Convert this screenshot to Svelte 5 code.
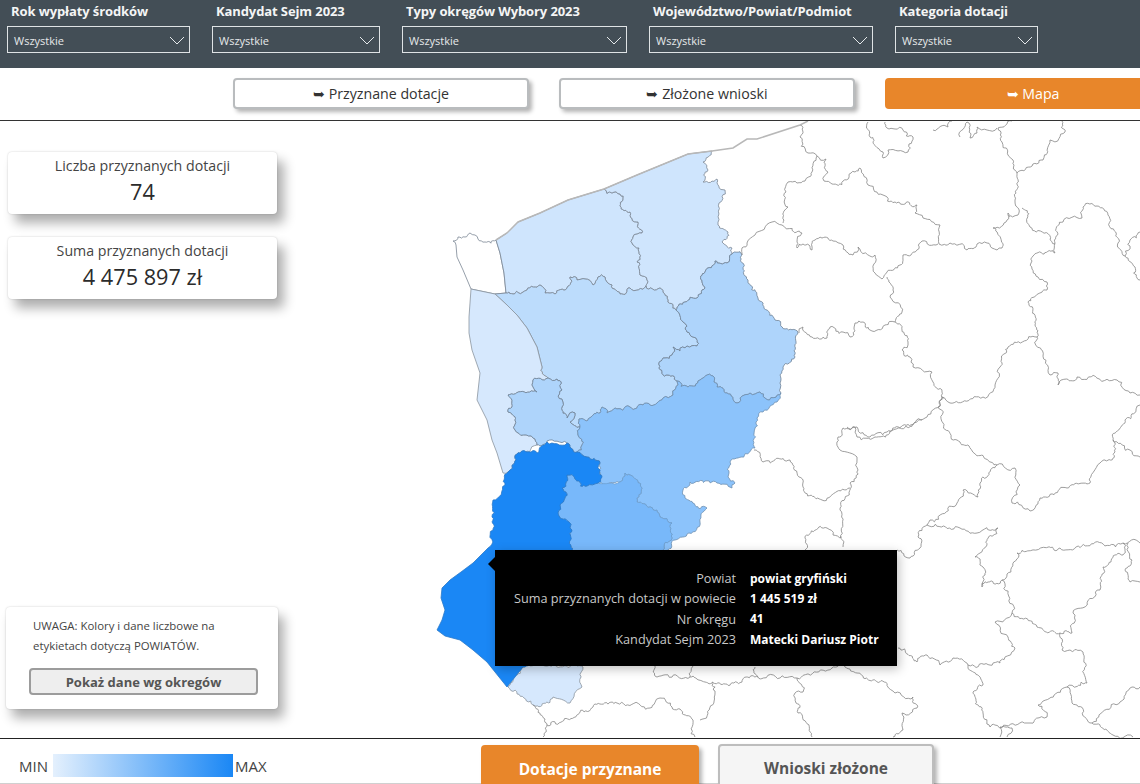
<script>
  const filters = [
    { label: 'Rok wypłaty środków', width: 183 },
    { label: 'Kandydat Sejm 2023', width: 168 },
    { label: 'Typy okręgów Wybory 2023', width: 225 },
    { label: 'Województwo/Powiat/Podmiot', width: 224 },
    { label: 'Kategoria dotacji', width: 143 }
  ];

  // edges between these points stay straight (coast and the long smooth borders)
  const smooth = new Set(('496,240 507,233 518,222 540,213 568,200 604,189 637,175 688,154 712,151 500,253 504,273 506,293 495,294 471,289 ' +
    '507,305 517,315 527,328 537,347 542,367 469,317 469,333 472,350 480,373 477,400 487,420 492,440 497,453 503,473 463,270 457,257 456,245 ' +
    '488,548 473,563 461,572 450,580 442,588 441,598 445,610 442,620 437,630 445,636 460,640 473,650 487,662 507,687 523,667 700,152 733,148 747,139 757,139 800,125 808,121').split(' '));

  function rng(seed) {
    let s = seed >>> 0;
    return () => {
      s = (s * 1664525 + 1013904223) >>> 0;
      return s / 4294967296;
    };
  }

  // midpoint displacement, seeded by the edge itself so shared borders line up
  function split(a, b, rand, out) {
    const dx = b[0] - a[0];
    const dy = b[1] - a[1];
    const len = Math.hypot(dx, dy);
    if (len < 3) return out.push(b);
    const d = (rand() * 2 - 1) * Math.min(len * 0.3, 3);
    const m = [(a[0] + b[0]) / 2 - (dy / len) * d, (a[1] + b[1]) / 2 + (dx / len) * d];
    split(a, m, rand, out);
    split(m, b, rand, out);
  }

  function wiggle(str, closed) {
    const pts = str.split(' ').map((p) => p.split(',').map(Number));
    const out = [pts[0]];
    const n = closed ? pts.length : pts.length - 1;
    for (let i = 0; i < n; i++) {
      const a = pts[i];
      const b = pts[(i + 1) % pts.length];
      if (smooth.has(a.join()) && smooth.has(b.join())) {
        out.push(b);
        continue;
      }
      const flip = a[0] > b[0] || (a[0] === b[0] && a[1] > b[1]);
      const [p, q] = flip ? [b, a] : [a, b];
      const rand = rng(p[0] * 7919 + p[1] * 613 + q[0] * 101 + q[1] * 37);
      for (let k = 0; k < 5; k++) rand();
      const part = [];
      split(p, q, rand, part);
      if (flip) {
        part.pop();
        part.reverse();
        part.push(a === p ? q : p);
        out.push(...part.slice(0, -1), b);
      } else {
        out.push(...part);
      }
    }
    return out.map((p) => p[0].toFixed(1) + ',' + p[1].toFixed(1)).join(' ');
  }

  const regions = [
    { fill: '#ffffff', line: '#7b8794', pts: '453,241 458,237 465,237 470,233 475,235 478,239 485,242 496,240 500,253 504,273 506,293 495,294 471,289 463,270 457,257 456,245' },
    { fill: '#cfe5fd', line: '#7b8794', pts: '496,240 507,233 518,222 540,213 568,200 604,189 612,193 620,194 623,200 620,206 630,212 638,222 642,233 633,237 632,243 639,248 637,262 640,275 647,280 646,286 630,288 620,294 612,285 605,277 598,277 593,285 585,279 577,280 570,277 567,288 555,294 545,293 540,285 527,290 506,293 504,273 500,253' },
    { fill: '#cfe5fd', line: '#7b8794', pts: '604,189 637,175 688,154 712,151 703,162 708,170 703,182 717,179 725,190 719,203 718,225 728,232 722,242 732,248 732,254 727,263 715,261 705,272 702,282 705,288 697,298 685,302 676,310 668,300 660,288 646,286 647,280 640,275 637,262 639,248 632,243 633,237 642,233 638,222 630,212 620,206 623,200 620,194 612,193' },
    { fill: '#bcdcfc', line: '#7b8794', pts: '495,294 506,293 527,290 540,285 545,293 555,294 567,288 570,277 577,280 585,279 593,285 598,277 605,277 612,285 620,294 630,288 646,286 660,288 668,300 676,310 683,322 687,332 693,337 697,346 687,346 680,351 673,347 672,355 665,358 659,368 668,375 677,381 673,395 663,398 657,403 643,405 630,407 615,408 607,413 602,407 600,413 579,419 580,427 570,422 575,413 567,418 562,407 562,390 557,379 548,378 542,367 537,347 527,328 517,315 507,305' },
    { fill: '#d6e8fd', line: '#8a949e', pts: '471,289 495,294 507,305 517,315 527,328 537,347 542,367 548,378 533,380 532,385 537,392 508,395 512,407 508,412 515,420 515,430 533,438 537,445 520,453 508,472 503,473 497,453 492,440 487,420 477,400 480,373 472,350 469,333 469,317' },
    { fill: '#aed4fb', line: '#6f8296', pts: '533,380 548,378 557,379 562,390 562,407 567,418 575,413 570,422 580,427 578,435 582,445 577,452 567,443 547,441 537,445 533,438 515,430 515,420 508,412 512,407 508,395 537,392 532,385' },
    { fill: '#aed4fb', line: '#6f8296', pts: '732,254 742,254 748,280 758,298 775,320 798,333 795,357 783,367 780,383 781,393 765,398 760,392 750,393 737,403 727,393 717,387 713,376 700,380 688,387 677,381 668,375 659,368 665,358 672,355 673,347 680,351 687,346 697,346 693,337 687,332 683,322 676,310 685,302 697,298 705,288 702,282 705,272 715,261 727,263' },
    { fill: '#8cc3fb', line: '#6f8fb0', pts: '579,419 600,413 602,407 607,413 615,408 630,407 643,405 657,403 663,398 673,395 677,381 688,387 700,380 713,376 717,387 727,393 737,403 750,393 760,392 765,398 781,393 777,402 763,412 757,418 755,448 730,462 728,477 735,483 732,488 717,483 690,482 683,490 685,498 707,508 700,522 675,540 668,550 663,550 672,538 672,523 660,517 637,502 642,488 630,475 625,473 620,482 597,484 600,463 587,457 577,452 582,445 578,435 580,427' },
    { fill: '#78b8fa', line: '#6c9fd2', pts: '598,483 587,486 567,475 562,488 565,498 558,513 572,530 572,600 663,600 663,550 672,538 672,523 660,517 637,502 642,488 630,475 625,473 620,482' },
    { fill: '#d6e8fd', line: '#8a949e', pts: '508,687 523,667 583,667 582,687 570,703 553,697 533,705' },
    { fill: '#1a87f5', line: '#2a78c8', pts: '547,442 537,453 520,453 508,472 505,485 493,500 492,517 493,530 488,548 473,563 461,572 450,580 442,588 441,598 445,610 442,620 437,630 445,636 460,640 473,650 487,662 507,687 523,667 572,640 572,530 558,513 565,498 562,488 567,475 587,486 598,483 600,463 587,457 577,452 567,443' }
  ].map((r) => ({ ...r, pts: wiggle(r.pts, true) }));

  const borders = [
    '800,125 800,137 808,153 817,156 826,159 828,172 824,181 832,184 843,181 855,172 860,168 868,185 883,195 895,202 917,205 915,213 923,218 940,225 939,244 950,243 967,250 977,244 987,243 992,248 1002,248 993,228 1007,220 1008,213 1018,215 1015,200 1017,173 1013,160 1002,142 998,128 1012,121',
    '817,156 812,172 805,181 797,183 788,182 786,192 788,207 783,217 783,223',
    '742,255 747,243 755,235 772,222 782,225 802,233 797,242 797,248 803,244 812,250 815,240 822,238 833,241 843,245 853,255 858,247 875,255 875,273 882,279 887,272 900,265 903,255 915,252 922,241 938,244',
    '799,333 803,327 812,337 827,338 830,327 843,332 850,337 855,323 863,322 870,330 885,325 895,322 902,312 890,297 893,290 887,277',
    '895,322 908,342 902,350 910,357 913,367 932,372 933,382 942,392 940,403 927,417 913,425 887,432 870,437 857,427 843,428 838,437 840,450 857,460 858,470 850,483 840,510 843,547',
    '847,427 855,427 857,437 875,437 900,428 922,420',
    '754,450 763,462 790,460 803,487 822,500 850,488',
    '942,397 950,403 983,397 995,385 1000,367 1008,347 1037,337 1035,325 1028,302 1047,290 1047,282 1038,277 1031,263 1033,256 1055,253 1055,243 1063,222 1082,218 1083,207 1097,206 1108,215 1118,243 1125,256 1130,240 1140,232',
    '1017,173 1043,160 1050,140 1065,132 1062,121',
    '1022,208 1030,227 1055,244',
    '1037,337 1050,375 1058,373 1058,385 1077,377 1117,380 1130,393 1140,395',
    '1125,256 1135,267 1137,278 1140,280',
    '942,397 938,407 943,423 960,442 997,465 1015,468 1020,485 1012,503 1030,511 1040,498 1067,488 1090,483 1100,463 1115,452 1113,440 1140,457',
    '1113,440 1125,420 1140,405',
    '997,465 980,483 978,497 963,490 957,503 930,520 927,525 960,528 977,533 998,528 987,545 975,557 983,567 982,587 1002,580 1017,553 1060,548 1123,543 1140,543',
    '927,525 918,537 920,548 910,558 897,550',
    '1002,580 1012,613 1037,627 1060,633 1072,633 1073,613 1100,590 1103,567 1123,555 1123,543',
    '1128,543 1132,560 1125,570 1130,582 1140,582',
    '1012,613 995,622 1008,637 1015,648 1000,663 968,665 953,658 940,665 927,655 917,662 898,648',
    '1060,633 1062,650 1083,652 1087,683 1067,687 1038,705 1047,717 1027,723 990,727 983,713 973,692 983,685 968,665',
    '1067,687 1072,703 1092,723 1120,702 1132,687 1140,687',
    '1092,723 1113,735 1133,737',
    '755,667 758,677 797,678 832,668 845,667 857,673 895,693 913,697 917,708 902,713 903,730 893,737',
    '758,677 712,682 715,693 700,720',
    '797,678 803,692 795,693 798,713 812,737',
    '533,705 547,725 543,737',
    '547,725 593,707 617,703 650,708 660,698 672,707 693,720 695,737',
    '655,666 657,677 690,677 693,666',
    '690,677 712,683',
    '1007,737 1012,728 1000,727 1000,737',
    '805,550 805,538 827,528 842,537',
    '868,122 870,137 883,152 883,158 888,150 908,152 913,137 903,130 887,128 885,122',
    '933,130 948,127 952,121',
    '960,137 967,122 970,138 977,133 977,127 987,130 997,128'
  ].map((b) => wiggle(b, false));

  const coast = '496,240 507,233 518,222 540,213 568,200 604,189 637,175 688,154 712,151 733,148 747,139 757,139 800,125 808,121';
</script>

<div class="page">
  <header class="filters">
    {#each filters as f}
      <div class="filter">
        <div class="filter-label">{f.label}</div>
        <div class="select" style="width: {f.width}px">
          <span>Wszystkie</span>
          <svg width="16" height="9" viewBox="0 0 16 9"><path d="M1 1l7 7 7-7" fill="none" stroke="#e6eaec" stroke-width="1"/></svg>
        </div>
      </div>
    {/each}
  </header>

  <nav class="tabs">
    <button class="tab">➥ Przyznane dotacje</button>
    <button class="tab">➥ Złożone wnioski</button>
    <button class="tab active">➥ Mapa</button>
  </nav>

  <main class="map-area">
    <svg class="map" viewBox="0 121 1140 617" width="1140" height="617">
      {#each regions as r}
        <polygon points={r.pts} fill={r.fill} stroke={r.line} stroke-width="0.8" stroke-linejoin="round" />
      {/each}
      {#each borders as b}
        <polyline points={b} fill="none" stroke="#858585" stroke-width="0.8" stroke-linejoin="round" />
      {/each}
      <polyline points={coast} fill="none" stroke="#b8b8b8" stroke-width="1.5" />
    </svg>

    <aside class="side">
      <div class="stats">
        <div class="card">
          <div class="card-title">Liczba przyznanych dotacji</div>
          <div class="card-value">74</div>
        </div>
        <div class="card">
          <div class="card-title">Suma przyznanych dotacji</div>
          <div class="card-value">4 475 897 zł</div>
        </div>
      </div>
      <div class="note">
        <p>UWAGA: Kolory i dane liczbowe na etykietach dotyczą POWIATÓW.</p>
        <button class="note-btn">Pokaż dane wg okregów</button>
      </div>
    </aside>

    <div class="tooltip">
      <span class="t-label">Powiat</span><span class="t-value">powiat gryfiński</span>
      <span class="t-label">Suma przyznanych dotacji w powiecie</span><span class="t-value">1 445 519 zł</span>
      <span class="t-label">Nr okręgu</span><span class="t-value">41</span>
      <span class="t-label">Kandydat Sejm 2023</span><span class="t-value">Matecki Dariusz Piotr</span>
    </div>
  </main>

  <footer class="bottom">
    <div class="legend">
      <span>MIN</span>
      <div class="scale"></div>
      <span>MAX</span>
    </div>
    <div class="switch">
      <button class="switch-btn on">Dotacje przyznane</button>
      <button class="switch-btn">Wnioski złożone</button>
    </div>
  </footer>
</div>

<style>
  :global(body) {
    margin: 0;
    background: #fff;
  }

  .page {
    width: 1140px;
    height: 784px;
    display: flex;
    flex-direction: column;
    overflow: hidden;
    font-family: "Open Sans", "Noto Sans", sans-serif;
    color: #333;
  }

  .filters {
    height: 68px;
    box-sizing: border-box;
    flex: none;
    background: #434e56;
    display: flex;
    gap: 22px;
    padding: 3px 0 0 7px;
  }

  .filter-label {
    color: #f4f5f5;
    font-size: 13px;
    font-weight: 700;
    line-height: 17px;
    padding-left: 4px;
    margin-bottom: 6px;
    white-space: nowrap;
    letter-spacing: -0.1px;
  }

  .select {
    height: 27px;
    box-sizing: border-box;
    border: 1px solid #dfe3e5;
    display: flex;
    align-items: center;
    justify-content: space-between;
    padding: 1px 4px 0 6px;
    color: #e6e9ea;
    font-size: 11px;
  }

  .tabs {
    flex: none;
    height: 53px;
    box-sizing: border-box;
    border-bottom: 1px solid #333;
    display: flex;
    gap: 30px;
    padding: 10px 0 0 233px;
  }

  .tab {
    flex: none;
    width: 296px;
    height: 31px;
    background: #fff;
    border: 2px solid #b9bcbe;
    border-radius: 4px;
    box-shadow: 3px 3px 4px rgba(0, 0, 0, 0.3);
    font: inherit;
    font-size: 14.2px;
    color: #333;
    padding: 0;
  }

  .tab.active {
    background: #e8862a;
    border-color: #e8862a;
    color: #fff;
    box-shadow: none;
  }

  .map-area {
    position: relative;
    flex: 1;
    border-bottom: 1px solid #222;
  }

  .map {
    position: absolute;
    left: 0;
    top: 0;
    display: block;
  }

  .side {
    position: relative;
    height: 100%;
    width: 290px;
    box-sizing: border-box;
    padding: 31px 0 29px 8px;
    display: flex;
    flex-direction: column;
    justify-content: space-between;
  }

  .stats {
    display: flex;
    flex-direction: column;
    gap: 23px;
  }

  .card {
    width: 269px;
    height: 62px;
    box-sizing: border-box;
    background: #fff;
    border-radius: 4px;
    box-shadow: 7px 9px 12px rgba(0, 0, 0, 0.32), 0 0 2px rgba(0, 0, 0, 0.2);
    text-align: center;
    padding-top: 4px;
  }

  .card-title {
    font-size: 14.2px;
    line-height: 20px;
    color: #444;
  }

  .card-value {
    font-size: 21.7px;
    line-height: 32px;
    color: #2b2b2b;
  }

  .note {
    width: 272px;
    height: 102px;
    margin-left: -2px;
    box-sizing: border-box;
    background: #fff;
    border-radius: 4px;
    box-shadow: 6px 9px 12px rgba(0, 0, 0, 0.32), 0 0 2px rgba(0, 0, 0, 0.2);
    padding: 9px 21px 0 27px;
  }

  .note p {
    margin: 0 0 12px;
    font-size: 11.4px;
    line-height: 20px;
    color: #444;
  }

  .note-btn {
    display: block;
    width: 229px;
    height: 27px;
    margin-left: -4px;
    background: #eeeeee;
    border: 2px solid #9c9c9c;
    border-radius: 4px;
    font: inherit;
    font-size: 13px;
    font-weight: 700;
    color: #555;
    padding: 0;
  }

  .tooltip {
    position: absolute;
    left: 495px;
    top: 429px;
    width: 402px;
    height: 116px;
    box-sizing: border-box;
    background: #000;
    box-shadow: 2px 3px 10px rgba(0, 0, 0, 0.25);
    padding: 18px 0 0 0;
    display: grid;
    grid-template-columns: 241px 1fr;
    column-gap: 14px;
    grid-auto-rows: 20.3px;
    align-items: center;
    font-size: 12px;
  }

  .tooltip::before {
    content: '';
    position: absolute;
    left: -7px;
    top: 7px;
    border: 7px solid transparent;
    border-left: 0;
    border-right-color: #000;
  }

  .t-label {
    color: #c8c8c8;
    font-size: 12.7px;
    text-align: right;
    white-space: nowrap;
  }

  .t-value {
    color: #fff;
    font-weight: 700;
    white-space: nowrap;
  }

  .bottom {
    flex: none;
    height: 45px;
    box-sizing: border-box;
    border-bottom: 1px solid #d0d0d0;
    position: relative;
    display: flex;
  }

  .legend {
    width: 481px;
    flex: none;
    display: flex;
    align-items: center;
    gap: 2px;
    padding: 9px 0 0 19px;
    box-sizing: border-box;
    font-size: 15px;
    color: #444;
  }

  .scale {
    width: 180px;
    height: 23px;
    margin-left: 3px;
    background: linear-gradient(90deg, #e4f0fd, #1a87f5);
  }

  .switch {
    display: flex;
    gap: 19px;
    padding-top: 5px;
  }

  .switch-btn {
    width: 216px;
    height: 48px;
    box-sizing: border-box;
    background: #f5f5f5;
    border: 2px solid #bdbdbd;
    border-radius: 4px;
    box-shadow: 3px 3px 4px rgba(0, 0, 0, 0.3);
    font: inherit;
    font-size: 15.5px;
    font-weight: 700;
    color: #555;
    padding: 0;
  }

  .switch-btn.on {
    width: 218px;
    margin-top: 1px;
    background: #e8862a;
    border-color: #e8862a;
    color: #fff;
  }
</style>
